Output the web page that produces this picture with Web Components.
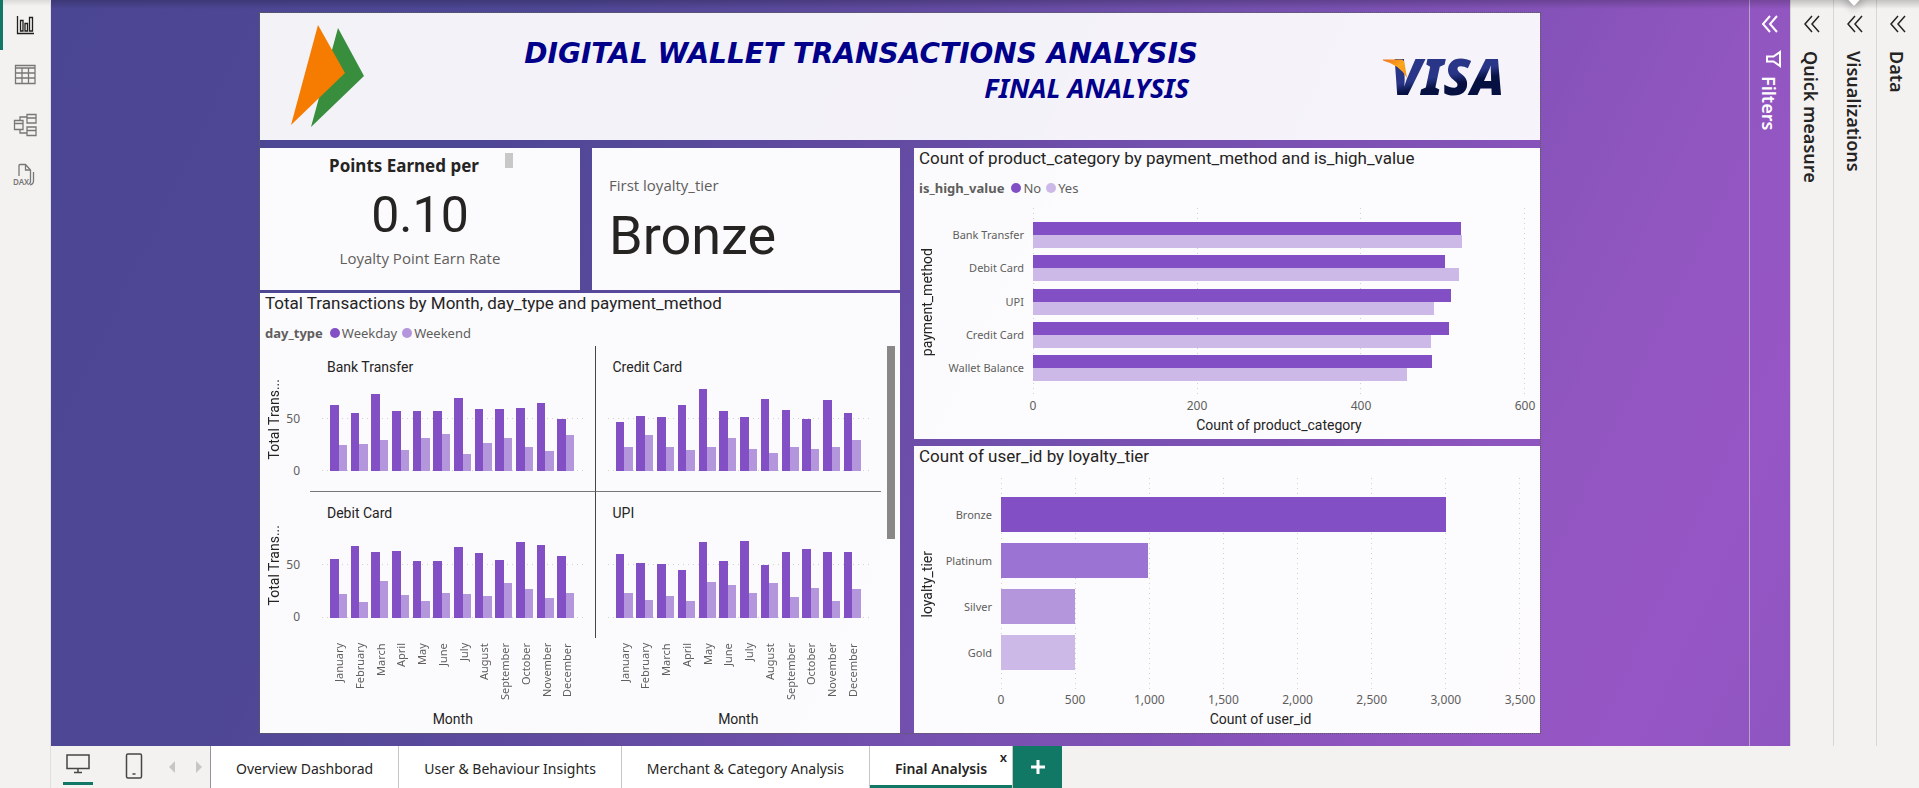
<!DOCTYPE html>
<html lang="en">
<head>
<meta charset="utf-8">
<title>Digital Wallet Transactions Analysis</title>
<style>
  html, body { margin: 0; height: 100%; }
  body {
    font-family: "Noto Sans", "Open Sans", sans-serif;
    color: #252423;
    --label: "Noto Sans", "Open Sans", sans-serif;
    --display: Roboto, "Noto Sans", sans-serif;
    --ink: #252423;
    --muted: #605e5c;
    --chrome: #f3f2f1;
    --line: #d9d7d5;
    --accent: #117865;
    --c1: #8250c4;
    --c2: #9b73d2;
    --c3: #b496dc;
    --c4: #cdb9e7;
  }
</style>
</head>
<body>
<report-app>
  <view-rail slot="rail"></view-rail>
  <report-canvas slot="canvas">
    <report-header slot="header">
      DIGITAL WALLET TRANSACTIONS ANALYSIS
      <span slot="sub">FINAL ANALYSIS</span>
    </report-header>
    <kpi-card slot="kpi1" align="center" value="0.10" label="Loyalty Point Earn Rate">Points Earned per</kpi-card>
    <kpi-card slot="kpi2" align="start" value="Bronze" label="First loyalty_tier"></kpi-card>
    <small-multiples slot="months">Total Transactions by Month, day_type and payment_method</small-multiples>
    <bar-chart slot="category" id="category">Count of product_category by payment_method and is_high_value</bar-chart>
    <bar-chart slot="tier" id="tier">Count of user_id by loyalty_tier</bar-chart>
  </report-canvas>
  <side-pane slot="filters" kind="filters">Filters</side-pane>
  <side-pane slot="panes">Quick measure</side-pane>
  <side-pane slot="panes">Visualizations</side-pane>
  <side-pane slot="panes">Data</side-pane>
  <page-bar slot="pages"></page-bar>
</report-app>

<script>
function define(name, css, render) {
  customElements.define(name, class extends HTMLElement {
    constructor() {
      super();
      this.attachShadow({ mode: "open" });
    }
    connectedCallback() {
      this.shadowRoot.innerHTML =
        `<style>:host,*{box-sizing:border-box}button{font:inherit;color:inherit;background:none;border:0;padding:0;margin:0}${css}</style>` + render(this);
    }
  });
}

/* ---------- application frame ---------- */
define("report-app", `
  :host { display: flex; min-height: 100vh; background: var(--chrome); }
  .main { flex: 1; min-width: 0; display: flex; flex-direction: column; }
  .work { flex: 1; display: flex; position: relative; }
  .wall { flex: 1; min-width: 0; display: flex;
    background: linear-gradient(115deg, #4b4693 0%, #4e4795 24%, #5f4a9f 40%, #7350ae 57%, #8452b8 72%, #9156c0 82%, #9656c5 92%, #8e55c0 100%); }
  .stage { flex: 1; min-width: 0; padding: 12px 24px; display: flex; justify-content: center; }
  .shade { position: absolute; inset: 0 0 auto 0; height: 9px; pointer-events: none;
    background: linear-gradient(rgba(0,0,0,.2), rgba(0,0,0,0)); }
  .tip { position: absolute; top: 0; right: 48px; width: 34px; height: 20px; pointer-events: none; }
`, () => `
  <slot name="rail"></slot>
  <div class="main">
    <div class="work">
      <div class="wall">
        <div class="stage"><slot name="canvas"></slot></div>
        <slot name="filters"></slot>
      </div>
      <slot name="panes"></slot>
      <div class="shade"></div>
      <svg class="tip" viewBox="0 0 34 20"><defs><filter id="s" x="-1" y="-1" width="3" height="3"><feGaussianBlur stdDeviation="4"/></filter></defs>
        <path d="M6 -4H28L17 10Z" fill="#000" opacity=".28" filter="url(#s)"/><path d="M10.500 -1H23.500L18 5Q17 6 16 5Z" fill="#fff"/></svg>
    </div>
    <slot name="pages"></slot>
  </div>`);

/* ---------- left rail ---------- */
define("view-rail", `
  :host { display: flex; flex-direction: column; flex: none; width: 51px; border-right: 1px solid #e1dfdd; background: linear-gradient(rgba(0,0,0,.1), rgba(0,0,0,0) 6px), var(--chrome); }
  button { height: 50px; display: flex; align-items: center; justify-content: center; border-left: 3px solid transparent; padding-right: 3px; color: #797775; }
  button.on { border-color: var(--accent); color: #201f1e; }
  svg { width: 24px; height: 24px; fill: none; stroke: currentColor; stroke-width: 1.300; }
`, () => `
  <button class="on" aria-label="Report view"><svg viewBox="0 0 24 24"><path d="M4.500 3V20.500H21"/><path d="M7.500 7.500h2.500V18H7.500zM12 10.500H14.500V18H12zM16.500 4.500H19.500V18H16.500z"/></svg></button>
  <button aria-label="Table view"><svg viewBox="0 0 24 24"><path d="M2.500 2.500H22V20.500H2.500zM2.500 5H22M2.500 10H22M2.500 15H22M9 5V20M15.500 5V20"/></svg></button>
  <button aria-label="Model view"><svg viewBox="0 0 24 24"><path d="M1.500 7.500H10V16.500H1.500zM1.500 10.500H10M14 1.500H23V10H14zM14 5H23M14 14H23V22.500H14zM14 17.500H23M7 7.500V4H14M7 16.500V20H14"/></svg></button>
  <button aria-label="DAX query view"><svg viewBox="0 0 24 24"><path d="M6 13V2.500Q6 1.500 7 1.500H12.500L17.500 7V18.500Q17.500 20 16 21M12.500 1.500V7H17.500M20.500 9V18Q20.500 21 17 22"/><text x="0" y="22" font-size="8" font-family="Noto Sans, sans-serif" font-weight="600" fill="currentColor" stroke="none">DAX</text></svg></button>`);

/* ---------- right panes ---------- */
define("side-pane", `
  :host { flex: none; width: 43px; display: flex; flex-direction: column; align-items: center; border-left: 1px solid var(--line); color: var(--ink); background: var(--chrome); }
  :host([kind="filters"]) { width: 41px; color: #fff; border-left-color: #b9a3cf; background: none; }
  button { width: 32px; height: 48px; display: flex; align-items: center; justify-content: center; }
  svg { width: 18px; height: 18px; fill: none; stroke: currentColor; stroke-width: 1.500; display: block; }
  :host([kind="filters"]) svg { stroke-width: 2; }
  .funnel { margin: 2px 0 8px 5px; }
  h2 { margin: 0; padding: 3px 3px 0 0; font: 600 18px/24px var(--label); writing-mode: vertical-rl; }
  :host([kind="filters"]) h2 { padding: 0 3px 0 0; }
`, el => `
  <button aria-label="Expand pane"><svg viewBox="0 0 18 18"><path d="M9 1L2 9L9 17M16 1L9 9L16 17"/></svg></button>
  ${el.getAttribute("kind") ? `<svg class="funnel" viewBox="0 0 18 18"><path d="M16 2V16L9.500 11.500H3V6.500H9.500Z"/></svg>` : ""}
  <h2><slot></slot></h2>`);

/* ---------- page tabs ---------- */
define("page-bar", `
  :host { flex: none; display: flex; height: 42px; background: var(--chrome); }
  .views { width: 159px; flex: none; display: flex; align-items: flex-start; color: #484644; }
  .views button { display: flex; align-items: center; justify-content: center; flex: none; }
  .mode { width: 30px; height: 39px; margin-left: 12px; }
  .mode + .mode { margin-left: 26px; margin-right: 8px; }
  .views .on { border-bottom: 3px solid var(--accent); }
  .arrow { width: 28px; height: 42px; }
  svg { display: block; }
  nav { display: flex; }
  .tab { position: relative; padding: 3px 25px 0; border-left: 1px solid #c8c6c4; background: #fff; font: 400 14px/20px var(--label); white-space: nowrap; }
  .tab:first-child { border-left-color: #979593; }
  .tab.on { font-weight: 600; box-shadow: inset 0 -3px var(--accent); }
  .x { position: absolute; right: 5px; top: 3px; font: 600 13px/16px var(--label); }
  .add { width: 50px; display: flex; align-items: center; justify-content: center; background: var(--accent); border-left: 1px solid #c8c6c4; }
`, () => `
  <div class="views">
    <button class="mode on" aria-label="Desktop layout"><svg width="26" height="24" viewBox="0 0 26 24" fill="none" stroke="currentColor" stroke-width="1.500"><path d="M2 3H24V16.500H2zM13 16.500V20M9 20.500H17"/></svg></button>
    <button class="mode" aria-label="Mobile layout"><svg width="18" height="28" viewBox="0 0 18 28" fill="none" stroke="currentColor" stroke-width="1.500"><rect x="1.500" y="2" width="15" height="24" rx="1.500"/><path d="M7.500 22H10.500"/></svg></button>
    <button class="arrow" aria-label="Previous page"><svg width="7" height="12" viewBox="0 0 7 12"><path d="M7 0V12L1 6Z" fill="#c8c6c4"/></svg></button>
    <button class="arrow" aria-label="Next page"><svg width="7" height="12" viewBox="0 0 7 12"><path d="M0 0V12L6 6Z" fill="#c8c6c4"/></svg></button>
  </div>
  <nav>
    <button class="tab">Overview Dashborad</button>
    <button class="tab">User &amp; Behaviour Insights</button>
    <button class="tab">Merchant &amp; Category Analysis</button>
    <button class="tab on">Final Analysis<span class="x">x</span></button>
    <button class="add" aria-label="New page"><svg width="14" height="14" viewBox="0 0 14 14"><path d="M7 0V14M0 7H14" stroke="#fff" stroke-width="3"/></svg></button>
  </nav>`);

/* ---------- report canvas ---------- */
define("report-canvas", `
  :host { flex: 1; max-width: 1282px; min-width: 0; display: flex; flex-direction: column; gap: 8px; border: 1px dotted #5a5f55; }
  .body { flex: 1; display: grid; grid-template-columns: 640fr 626fr; gap: 14px; min-height: 0; }
  .left { display: grid; grid-template: 142fr 440fr / 320fr 308fr; gap: 3px 12px; min-width: 0; }
  .right { display: grid; grid-template-rows: 291fr 287fr; gap: 7px; min-width: 0; }
  ::slotted([slot="months"]) { grid-column: 1 / -1; }
`, () => `
  <slot name="header"></slot>
  <div class="body">
    <div class="left"><slot name="kpi1"></slot><slot name="kpi2"></slot><slot name="months"></slot></div>
    <div class="right"><slot name="category"></slot><slot name="tier"></slot></div>
  </div>`);

define("report-header", `
  :host { flex: none; height: 127px; display: flex; align-items: flex-start; padding: 12px 39px 0 31px; background: rgba(255,255,255,.93); }
  .logo { width: 73px; height: 102px; flex: none; }
  .titles { flex: 1; margin-right: 185px; padding-top: 12px; text-align: right; color: #00008b; }
  h1, h2 { margin: 0; white-space: nowrap; }
  h1 { font: italic 700 28px/34px "DejaVu Sans", Verdana, sans-serif; }
  h2 { font: italic 700 27px/34px var(--label); padding-right: 9px; }
  .visa { width: 118px; height: 40px; margin-top: 33px; flex: none; overflow: visible; }
`, () => `
  <svg class="logo" viewBox="0 0 73 102"><path d="M47 3L73 51L20 102Z" fill="#388e3c"/><path d="M27 0L54 48L0 100Z" fill="#f57c00"/></svg>
  <div class="titles"><h1><slot></slot></h1><h2><slot name="sub"></slot></h2></div>
  <svg class="visa" viewBox="0 0 118 40"><defs>
      <linearGradient id="v" x1="0" y1="0" x2=".3" y2="1"><stop offset=".58" stop-color="#293688"/><stop offset=".72" stop-color="#061041"/></linearGradient>
      <linearGradient id="o" x1="0" y1="0" x2="1" y2="1"><stop offset="0" stop-color="#f37021"/><stop offset=".5" stop-color="#faa61a"/><stop offset="1" stop-color="#f7941d"/></linearGradient></defs>
    <text x="8" y="37" font-family="Noto Sans, sans-serif" font-size="50" font-weight="900" font-style="italic" fill="url(#v)">VISA</text>
    <path d="M0 1.500H18Q21 1.500 21.500 5L24 20Q17 7 0 2.500Z" fill="url(#o)"/></svg>`);

/* ---------- KPI cards ---------- */
define("kpi-card", `
  :host { display: flex; flex-direction: column; background: rgba(255,255,255,.975); min-width: 0; }
  .head { display: flex; justify-content: center; gap: 26px; padding: 5px 0 0 26px; height: 41px; margin-right: 24px; }
  .head strong { font: 700 17px/26px var(--label); }
  .thumb { width: 8px; height: 15px; background: #c8c8c8; }
  .num { font: 400 50px/52px var(--display); text-align: center; }
  .cap { font: 400 15px/22px "Open Sans", "Noto Sans", sans-serif; color: var(--muted); text-align: center; padding-top: 6px; }
  .start { padding: 26px 17px 0; display: flex; flex-direction: column-reverse; gap: 14px; }
  .start .num, .start .cap { text-align: left; padding-top: 0; }
  .start .num { font-size: 54px; }
`, el => el.getAttribute("align") === "center"
  ? `<div class="head"><strong><slot></slot></strong><div class="thumb"></div></div>
     <div class="num">${el.getAttribute("value")}</div><div class="cap">${el.getAttribute("label")}</div>`
  : `<div class="start"><div class="num">${el.getAttribute("value")}</div><div class="cap">${el.getAttribute("label")}</div></div>`);

const panelCss = `
  h3 { margin: 0; padding: 0 5px; font: 400 17px/21px var(--display); color: var(--ink); white-space: nowrap; }
  .legend { display: flex; align-items: center; padding: 0 5px; font: 400 13px/18px var(--label); color: var(--muted); }
  .legend b { margin-right: 7px; }
  .legend i { width: 10px; height: 10px; border-radius: 5px; margin-right: 2px; }
  .legend span { margin-right: 5px; }
  .axis { font: 400 14px/18px var(--display); color: var(--ink); text-align: center; }
  .vert { writing-mode: vertical-rl; transform: rotate(180deg); }
`;

/* ---------- horizontal bars ---------- */
const charts = {
  category: {
    y: "payment_method", x: "Count of product_category", max: 600, ticks: ["0", "200", "400", "600"],
    field: "is_high_value", legend: [["No", "--c1"], ["Yes", "--c4"]], gutter: 119, edge: 15, pad: "14px 0 15px", bar: 13,
    rows: [["Bank Transfer", 522, 523], ["Debit Card", 503, 519], ["UPI", 510, 489], ["Credit Card", 507, 485], ["Wallet Balance", 486, 456]]
  },
  tier: {
    y: "loyalty_tier", x: "Count of user_id", max: 3500, ticks: ["0", "500", "1,000", "1,500", "2,000", "2,500", "3,000", "3,500"],
    gutter: 87, edge: 20, pad: "19px 0 20px", bar: 35,
    rows: [["Bronze", 3003], ["Platinum", 991], ["Silver", 502], ["Gold", 496]], fills: ["--c1", "--c2", "--c3", "--c4"]
  }
};
define("bar-chart", panelCss + `
  :host { display: flex; flex-direction: column; background: rgba(255,255,255,.975); min-width: 0; }
  .legend { margin-top: 10px; }
  .plot { flex: 1; display: grid; grid-template-rows: 1fr 20px 20px; margin-top: 11px; padding-bottom: 3px; }
  .y { grid-area: 1 / 1 / 2; align-self: center; justify-self: start; margin-left: 4px; }
  .cats { grid-area: 1 / 1; display: flex; flex-direction: column; justify-content: space-between; text-align: right; margin-right: 9px; font: 400 11px/16px var(--label); color: var(--muted); }
  .cats div { display: flex; align-items: center; justify-content: flex-end; }
  .grid, .bars { grid-area: 1 / 2; display: flex; justify-content: space-between; }
  .grid i { width: 1px; background: repeating-linear-gradient(#d2d0ce 0 1px, transparent 1px 5px); }
  .bars { flex-direction: column; }
  .bar { display: block; }
  .ticks { grid-area: 2 / 2; display: flex; justify-content: space-between; font: 400 12px/20px var(--label); color: var(--muted); }
  .ticks span { width: 0; display: flex; justify-content: center; }
  .x { grid-area: 3 / 2; }
`, el => {
  const c = charts[el.id];
  const h = c.bar * (c.rows[0].length - 1);
  return `
  <h3><slot></slot></h3>
  ${c.legend ? `<div class="legend"><b>${c.field}</b>${c.legend.map(l => `<i style="background:var(${l[1]})"></i><span>${l[0]}</span>`).join("")}</div>` : ""}
  <div class="plot" style="grid-template-columns:${c.gutter}px 1fr;padding-right:${c.edge}px">
    <div class="axis vert y">${c.y}</div>
    <div class="cats" style="padding:${c.pad}">${c.rows.map(r => `<div style="height:${h}px">${r[0]}</div>`).join("")}</div>
    <div class="grid">${c.ticks.map(() => "<i></i>").join("")}</div>
    <div class="bars" style="padding:${c.pad}">${c.rows.map((r, i) => `<div>${r.slice(1).map((v, j) =>
      `<span class="bar" style="height:${c.bar}px;width:${(v / c.max * 100).toFixed(2)}%;background:var(${c.fills ? c.fills[i] : c.legend[j][1]})"></span>`).join("")}</div>`).join("")}</div>
    <div class="ticks">${c.ticks.map(t => `<span>${t}</span>`).join("")}</div>
    <div class="axis x">${c.x}</div>
  </div>`;
});

/* ---------- small multiples ---------- */
const months = ["January", "February", "March", "April", "May", "June", "July", "August", "September", "October", "November", "December"];
const multiples = [
  ["Bank Transfer", [63,55,74,57,57,57,70,59,59,60,65,50], [25,26,30,20,32,35,16,27,32,23,19,34]],
  ["Credit Card", [47,53,52,63,78,57,52,69,58,50,68,55], [23,34,23,20,23,32,21,17,23,21,23,30]],
  ["Debit Card", [56,68,62,63,54,54,67,61,55,72,69,59], [23,15,35,22,16,24,23,21,33,27,19,24]],
  ["UPI", [60,52,51,45,72,54,73,50,62,65,62,62], [24,17,21,16,34,31,24,33,20,28,16,27]]
];
const TOP = 85;
const cell = (m, edge) => `
  <div class="cell ${edge}"><h4>${m[0]}</h4>
    <div class="area">
      <div class="lines"><i style="flex:${TOP - 50}"></i><u></u><i style="flex:50"></i><u></u></div>
      <div class="cols">${months.map((_, i) => `<div><b style="height:${(m[1][i] / TOP * 100).toFixed(2)}%"></b><b style="height:${(m[2][i] / TOP * 100).toFixed(2)}%"></b></div>`).join("")}</div>
    </div>
  </div>`;
const scale = `<div class="axis vert ty">Total Trans...</div>
  <div class="scale"><div class="lines"><i style="flex:${TOP - 50}"></i><span>50</span><i style="flex:50"></i><span>0</span></div></div>`;
const labels = `<div class="foot"><div class="months">${months.map(m => `<span class="vert">${m}</span>`).join("")}</div><div class="axis">Month</div></div>`;
define("small-multiples", panelCss + `
  :host { display: flex; flex-direction: column; background: rgba(255,255,255,.975); min-width: 0; }
  .legend { margin-top: 10px; height: 18px; }
  .wrap { flex: 1; margin-top: 4px; display: grid; grid-template: 1fr 1fr 95px / 24px 26px 1fr 1fr 6px 8px; padding-right: 5px; }
  .ty { justify-self: center; align-self: center; margin-left: 4px; }
  .scale { padding: 36px 10px 21px 0; display: flex; justify-content: flex-end; font: 400 12px/16px var(--label); color: var(--muted); }
  .lines { display: flex; flex-direction: column; }
  .scale span { height: 0; display: flex; align-items: center; justify-content: flex-end; }
  .cell { display: flex; flex-direction: column; padding: 11px 0 20px; }
  .tl { border-right: 1px solid #484644; border-bottom: 1px solid #797775; }
  .tr { border-bottom: 1px solid #797775; }
  .bl { border-right: 1px solid #484644; }
  h4 { margin: 0; padding-left: 17px; font: 400 14px/20px var(--display); }
  .area { flex: 1; margin-top: 5px; display: grid; }
  .area .lines, .cols { grid-area: 1 / 1; min-height: 0; }
  .area .lines { padding: 0 12px; }
  .area u { height: 1px; margin-top: -1px; background: repeating-linear-gradient(90deg, #d2d0ce 0 1px, transparent 1px 5px); }
  .cols, .months { display: flex; justify-content: space-between; padding: 0 20px; }
  .cols div { width: 17px; display: flex; align-items: flex-end; }
  .cols b { flex: 1; background: var(--c1); }
  .cols b + b { background: var(--c3); }
  .foot { padding-top: 5px; display: flex; flex-direction: column; }
  .months { flex: 1; }
  .months span { width: 17px; font: 400 11px/17px var(--label); color: var(--muted); text-align: right; }
  .foot .axis { padding-bottom: 5px; height: 23px; }
  .gap { grid-column: 1 / 3; }
  .track { grid-area: 1 / 6 / 3 / 7; }
  .track div { height: 66%; background: #8a8886; }
`, () => `
  <h3><slot></slot></h3>
  <div class="legend"><b>day_type</b><i style="background:var(--c1)"></i><span>Weekday</span><i style="background:var(--c3)"></i><span>Weekend</span></div>
  <div class="wrap">
    ${scale}${cell(multiples[0], "tl")}${cell(multiples[1], "tr")}<div></div>
    <div class="track"><div></div></div>
    ${scale}${cell(multiples[2], "bl")}${cell(multiples[3], "br")}<div></div>
    <div class="gap"></div>${labels}${labels}
  </div>`);
</script>
</body>
</html>
